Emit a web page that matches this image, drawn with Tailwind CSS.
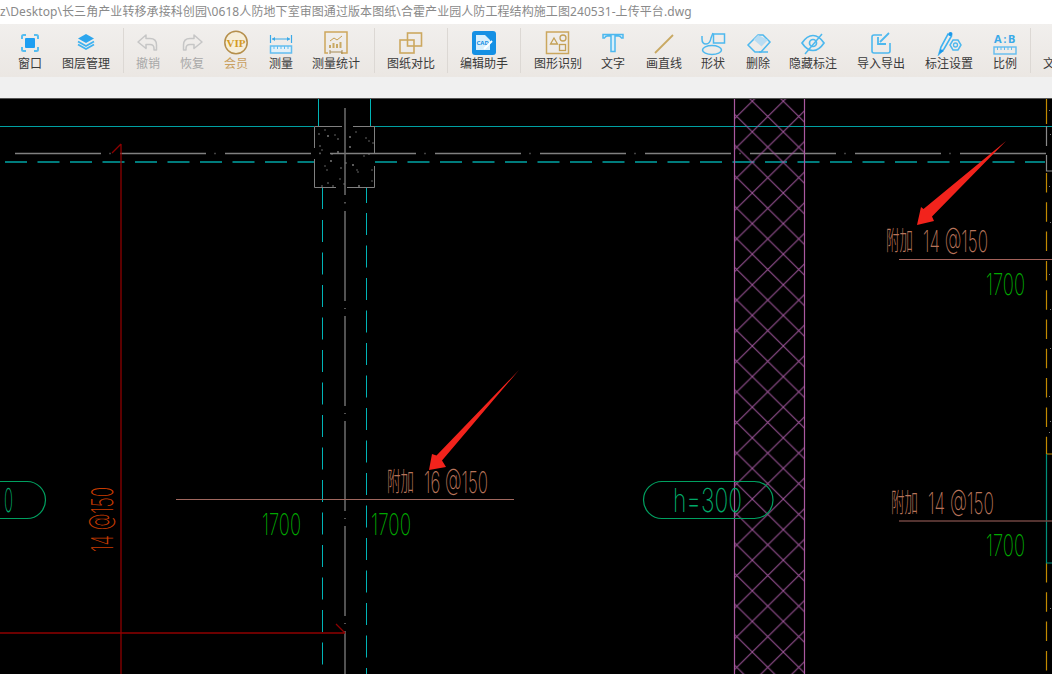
<!DOCTYPE html>
<html lang="zh-CN">
<head>
    <meta charset="UTF-8">
    <title>合霍产业园人防工程结构施工图</title>
    <script src="https://cdn.jsdelivr.net/npm/@tailwindcss/browser@4"></script>
</head>
<body class="w-[1052px] h-[674px] overflow-hidden bg-black font-['Noto_Sans','Noto_Sans_CJK_SC',sans-serif]">

<div class="flex flex-col h-[674px]">
    <!-- title -->
    <div class="h-6 shrink-0 bg-white text-[12px] tracking-[0.08px] leading-6 text-[#8a8a8a] whitespace-nowrap overflow-hidden">z\Desktop\长三角产业转移承接科创园\0618人防地下室审图通过版本图纸\合霍产业园人防工程结构施工图240531-上传平台.dwg</div>

    <!-- toolbar -->
    <div class="h-[53px] shrink-0 flex items-stretch bg-gradient-to-b from-[#f1efed] to-[#ebe7e3] text-[12px] leading-4 text-[#3a3a3a] overflow-hidden whitespace-nowrap">
        <div class="w-[60px] shrink-0 flex flex-col items-center pt-[5px]">
            <svg class="w-7 h-[27px]" viewBox="0 0 28 27" fill="none"><rect x="9" y="9" width="10" height="10" rx="1" fill="#1e9ff2"/><path d="M6 10V7.500Q6 6 7.500 6H10M18 6h2.500Q22 6 22 7.500V10M22 18v2.500Q22 22 20.500 22H18M10 22H7.500Q6 22 6 20.500V18" stroke="#56bdf0" stroke-width="2"/></svg>
            <span>窗口</span>
        </div>
        <div class="w-[52px] shrink-0 flex flex-col items-center pt-[5px]">
            <svg class="w-7 h-[27px]" viewBox="0 0 28 27" fill="none"><path d="M14 5l8 4.500-8 4.500-8-4.500z" fill="#2ca6ee"/><path d="M6 12.500l8 4.500 8-4.500M6 15.500l8 4.500 8-4.500" stroke="#3fb2f0" stroke-width="1.800"/></svg>
            <span>图层管理</span>
        </div>
        <div class="w-px shrink-0 my-1 ml-[11px] bg-[#dcd8d4]"></div>
        <div class="w-12 shrink-0 flex flex-col items-center pt-[5px] text-[#a8a8a8]">
            <svg class="w-7 h-[27px]" viewBox="0 0 28 27" fill="none"><path d="M12 6L4 13l8 6.500v-4h4q4 0 4 4v1.500h2.500v-5q0-6.500-6.500-6.500H12z" stroke="#c6c6c6" stroke-width="1.500" stroke-linejoin="round"/></svg>
            <span>撤销</span>
        </div>
        <div class="w-10 shrink-0 flex flex-col items-center pt-[5px] text-[#a8a8a8]">
            <svg class="w-7 h-[27px]" viewBox="0 0 28 27" fill="none"><path d="M16 6l8 7-8 6.500v-4h-4q-4 0-4 4v1.500H5.500v-5q0-6.500 6.500-6.500h4z" stroke="#c6c6c6" stroke-width="1.500" stroke-linejoin="round"/></svg>
            <span>恢复</span>
        </div>
        <div class="w-12 shrink-0 flex flex-col items-center pt-[5px] text-[#c9a060]">
            <svg class="w-7 h-[27px]" viewBox="0 0 28 27" fill="none"><circle cx="14" cy="13.500" r="11.200" fill="#f6eeda" stroke="#b58f4c" stroke-width="1.500"/><text x="14" y="17.500" text-anchor="middle" class="fill-[#d49a24] font-['Liberation_Serif'] font-bold text-[11px]">VIP</text></svg>
            <span>会员</span>
        </div>
        <div class="w-[42px] shrink-0 flex flex-col items-center pt-[5px]">
            <svg class="w-7 h-[27px]" viewBox="0 0 28 27" fill="none"><path d="M3.500 6v8M24.500 6v8M5 10h18" stroke="#3aa9e8" stroke-width="1.200"/><path d="M5 10l3-2v4zM23 10l-3-2v4z" fill="#3aa9e8"/><rect x="3.500" y="17" width="21" height="7" stroke="#62bdf0" stroke-width="1.500" fill="#e4f1f8"/><path d="M7 17v3M10.500 17v3M14 17v3M17.500 17v3M21 17v3" stroke="#62bdf0"/></svg>
            <span>测量</span>
        </div>
        <div class="w-[68px] shrink-0 flex flex-col items-center pt-[5px]">
            <svg class="w-7 h-[27px]" viewBox="0 0 28 27" fill="none"><path d="M19 24h6V3H3v21h3" stroke="#cda75c" stroke-width="1.500"/><path d="M8 12l4-3 3 2 5-4" stroke="#c79f50"/><path d="M8 19v-3M11.500 19v-5M15 19v-4M18.500 19v-6" stroke="#c9a965" stroke-width="2"/><path d="M8 23h12M8 21v4M20 21v4" stroke="#a58a55"/></svg>
            <span>测量统计</span>
        </div>
        <div class="w-px shrink-0 my-1 ml-1 bg-[#dcd8d4]"></div>
        <div class="w-[72px] shrink-0 flex flex-col items-center pt-[5px]">
            <svg class="w-7 h-[27px]" viewBox="0 0 28 27" fill="none"><rect x="10.500" y="4" width="14" height="13" stroke="#cca860" stroke-width="1.600"/><rect x="3" y="11" width="14" height="13" stroke="#cca860" stroke-width="1.600"/></svg>
            <span>图纸对比</span>
        </div>
        <div class="w-px shrink-0 my-1 bg-[#dcd8d4]"></div>
        <div class="w-[72px] shrink-0 flex flex-col items-center pt-[5px]">
            <svg class="w-7 h-[27px]" viewBox="0 0 28 27" fill="none"><rect x="2" y="2" width="24" height="24" rx="3" fill="#1590e4"/><path d="M6 6h9l5 5v10H6z" fill="#d8effc"/><text x="6.500" y="15.500" class="fill-[#1590e4] font-bold text-[6px]">CAD</text><path d="M14 20l8-8" stroke="#fff" stroke-width="2"/></svg>
            <span>编辑助手</span>
        </div>
        <div class="w-px shrink-0 my-1 bg-[#dcd8d4]"></div>
        <div class="w-[5px] shrink-0"></div>
        <div class="w-16 shrink-0 flex flex-col items-center pt-[5px]">
            <svg class="w-7 h-[27px]" viewBox="0 0 28 27" fill="none"><rect x="2.500" y="3" width="22" height="21.500" stroke="#cba75e" stroke-width="1.500"/><path d="M10 9l3.500 6h-7z" stroke="#c4a055" stroke-width="1.300"/><circle cx="19" cy="9" r="3" stroke="#c4a055" stroke-width="1.300"/><rect x="15.500" y="15.500" width="6" height="6" stroke="#c4a055" stroke-width="1.300"/></svg>
            <span>图形识别</span>
        </div>
        <div class="w-[46px] shrink-0 flex flex-col items-center pt-[5px]">
            <svg class="w-7 h-[27px]" viewBox="0 0 28 27" fill="none"><path d="M4 9V5.500h20V9h-1.500q-1-2-3-2H16v15.500h-4V7H8.500q-2 0-3 2z" fill="#d8effa" stroke="#4db8ee" stroke-width="1.500"/></svg>
            <span>文字</span>
        </div>
        <div class="w-14 shrink-0 flex flex-col items-center pt-[5px]">
            <svg class="w-7 h-[27px]" viewBox="0 0 28 27" fill="none"><path d="M5 24L23 6" stroke="#c9a862" stroke-width="1.800"/></svg>
            <span>画直线</span>
        </div>
        <div class="w-[42px] shrink-0 flex flex-col items-center pt-[5px]">
            <svg class="w-7 h-[27px]" viewBox="0 0 28 27" fill="none"><rect x="14.500" y="5" width="11" height="9" stroke="#4db8ee" stroke-width="1.500"/><path d="M3 7v3q0 5 4 5t5-6l2-5" stroke="#4db8ee" stroke-width="1.500"/><ellipse cx="13" cy="21" rx="9.500" ry="4.500" stroke="#4db8ee" stroke-width="1.500"/></svg>
            <span>形状</span>
        </div>
        <div class="w-12 shrink-0 flex flex-col items-center pt-[5px]">
            <svg class="w-7 h-[27px]" viewBox="0 0 28 27" fill="none"><path d="M14 6l-10 10 7 7h6l9-10-7-7z" stroke="#4db8ee" stroke-width="1.500"/><path d="M14 6l-4.500 4.500 8 7L24 11z" fill="#b8dcf2"/><path d="M15 23h9" stroke="#4db8ee" stroke-width="1.500"/></svg>
            <span>删除</span>
        </div>
        <div class="w-[62px] shrink-0 flex flex-col items-center pt-[5px]">
            <svg class="w-7 h-[27px]" viewBox="0 0 28 27" fill="none"><path d="M3 14q5-7.500 11-7.500T25 14q-5 7.500-11 7.500T3 14z" stroke="#4db8ee" stroke-width="1.700"/><circle cx="14" cy="14" r="3.500" stroke="#4db8ee" stroke-width="1.700"/><path d="M6 25L23 5" stroke="#4db8ee" stroke-width="1.500"/></svg>
            <span>隐藏标注</span>
        </div>
        <div class="w-[74px] shrink-0 flex flex-col items-center pt-[5px]">
            <svg class="w-7 h-[27px]" viewBox="0 0 28 27" fill="none"><path d="M15 6H7q-2 0-2 2v14q0 2 2 2h14q2 0 2-2v-8" stroke="#4db8ee" stroke-width="1.600"/><path d="M22 4l-9 9M11 8v7h8" stroke="#4db8ee" stroke-width="1.800"/></svg>
            <span>导入导出</span>
        </div>
        <div class="w-[62px] shrink-0 flex flex-col items-center pt-[5px]">
            <svg class="w-7 h-[27px]" viewBox="0 0 28 27" fill="none"><path d="M4 25l2-7L13 5l3.500 2-7.500 13z" stroke="#3fb2f0" stroke-width="1.600"/><path d="M4 25l1.500-5 3.500 2z" fill="#1c98ea"/><circle cx="15.500" cy="5" r="2" fill="#1c98ea"/><path d="M18 11l5 0 3 5-3 5h-5l-3-5z" stroke="#4db8ee" stroke-width="1.500"/><circle cx="20.500" cy="16" r="2" stroke="#4db8ee" stroke-width="1.300"/></svg>
            <span>标注设置</span>
        </div>
        <div class="w-[50px] shrink-0 flex flex-col items-center pt-[5px]">
            <svg class="w-7 h-[27px]" viewBox="0 0 28 27" fill="none"><text x="3" y="14" class="fill-[#3aa9e8] font-bold text-[11px]">A</text><text x="12.500" y="13.500" class="fill-[#3aa9e8] font-bold text-[10px]">:</text><text x="17" y="14" class="fill-[#3aa9e8] font-bold text-[11px]">B</text><rect x="3" y="18" width="22" height="7" stroke="#62bdf0" stroke-width="1.400"/><path d="M6.500 18v3M10 18v3M13.500 18v3M17 18v3M20.500 18v3" stroke="#62bdf0"/></svg>
            <span>比例</span>
        </div>
        <div class="w-px shrink-0 my-1 bg-[#dcd8d4]"></div>
        <div class="shrink-0 pl-3 pt-8">文</div>
    </div>

    <div class="h-[21px] shrink-0 bg-[#f0f0f0]"></div>
    <div class="h-px shrink-0 bg-[#555]"></div>

    <!-- drawing -->
    <svg class="block w-[1052px] h-[575px] bg-black" viewBox="0 99 1052 575" fill="none">
        <defs>
            <pattern id="hatch" patternUnits="userSpaceOnUse" x="752.300" y="499" width="31" height="30.600">
                <path d="M0 0L31 30.600M0 30.600L31 0" stroke="#a0559c" stroke-width="1"/>
            </pattern>
        </defs>

        <!-- axis lines -->
        <path d="M0 126.500H314M374 126.500H1052" stroke="#00a0a2" stroke-width="1.200"/>
        <path d="M318.500 99V126M370.500 99V126M322.500 188V209M366.500 188V203" stroke="#00b4b6"/>
        <path d="M15 153.500H1046" stroke="#808080" stroke-width="1.500" stroke-dasharray="86 8.500 1 9.500"/>
        <path d="M5 162H314M375 162H1045" stroke="#007c7c" stroke-width="2" stroke-dasharray="22 10.500"/>
        <path d="M322.500 220V674" stroke="#00b4b6" stroke-dasharray="22 10.500"/>
        <path d="M366.500 213V674" stroke="#00b4b6" stroke-dasharray="22 10.500"/>

        <!-- column -->
        <path d="M314.500 148V126.500H342M353 126.500H374.500V154M374.500 166V187.500H347M336 187.500H314.500V159" stroke="#808080"/>
        <path d="M345 108V195M345 202v1.500" stroke="#6e6e6e" stroke-width="1.500"/>
        <path d="M345 211V674" stroke="#6e6e6e" stroke-width="1.500" stroke-dasharray="90 7 1 7"/>
        <g fill="#858585">
            <circle cx="319" cy="134" r=".8"/><circle cx="325" cy="130" r=".7"/><circle cx="328" cy="136" r=".9"/><circle cx="335" cy="135" r=".7"/><circle cx="338" cy="139" r=".8"/><circle cx="350" cy="137" r=".9"/><circle cx="356" cy="132" r=".7"/><circle cx="366" cy="138" r=".7"/><circle cx="369" cy="141" r=".7"/><circle cx="373" cy="143" r=".7"/>
            <circle cx="320" cy="146" r=".8"/><circle cx="322" cy="150" r=".7"/><circle cx="320" cy="153" r=".6"/><circle cx="332" cy="154" r=".8"/><circle cx="338" cy="152" r=".9"/><circle cx="350" cy="147" r=".9"/><circle cx="364" cy="156" r=".7"/><circle cx="369" cy="154" r=".8"/>
            <circle cx="331" cy="161" r=".9"/><circle cx="325" cy="166" r=".7"/><circle cx="327" cy="170" r=".7"/><circle cx="341" cy="168" r=".8"/><circle cx="346" cy="163" r=".8"/><circle cx="353" cy="165" r=".9"/><circle cx="357" cy="170" r=".7"/><circle cx="358" cy="172" r=".7"/><circle cx="372" cy="170" r=".7"/><circle cx="340" cy="179" r=".7"/>
            <circle cx="328" cy="183" r=".8"/><circle cx="322" cy="186" r=".8"/><circle cx="333" cy="186" r=".8"/><circle cx="344" cy="184" r=".7"/><circle cx="359" cy="186" r=".9"/><circle cx="372" cy="181" r=".7"/>
        </g>

        <!-- red beams -->
        <path d="M121 144V674M112 153L121 144M0 633H345M336 624L345 633" stroke="#8e0000" stroke-width="1.300"/>

        <!-- hatched wall -->
        <rect x="735" y="99" width="69.500" height="575" fill="url(#hatch)"/>
        <path d="M734.500 99V674M804.500 99V674" stroke="#a9589f" stroke-width="1.200"/>

        <!-- right edge -->
        <path d="M1046.500 173V454M1046.500 563V674" stroke="#c28a00" stroke-width="1.200" stroke-dasharray="19.500 9.800"/>
        <path d="M1046.500 99V124" stroke="#c28a00" stroke-width="1.200"/>
        <path d="M1046.500 126V146M1046.500 155V171H1052" stroke="#8a8a8a" stroke-width="1.200"/>
        <path d="M1046.500 454H1052" stroke="#c28a00"/>
        <path d="M1046.500 454V563H1052" stroke="#00907c" stroke-width="1.200"/>
        <g fill="#7a7a7a"><rect x="1049" y="110" width="1" height="1"/><rect x="1050" y="134" width="1" height="1"/><rect x="1049" y="186" width="1" height="1"/><rect x="1050" y="222" width="1" height="1"/><rect x="1049" y="274" width="1" height="1"/><rect x="1050" y="309" width="1" height="1"/><rect x="1050" y="348" width="1" height="1"/><rect x="1049" y="396" width="1" height="1"/><rect x="1050" y="421" width="1" height="1"/><rect x="1049" y="432" width="1" height="1"/><rect x="1050" y="608" width="1" height="1"/></g>

        <!-- leader lines -->
        <path d="M899 259.500H1052" stroke="#a3625a"/>
        <path d="M176 499.500H514" stroke="#a0685f"/>
        <path d="M899 521H1052" stroke="#6f4540" stroke-width="1.300"/>

        <!-- level tags -->
        <rect x="643.500" y="481.500" width="129.500" height="37" rx="18.500" stroke="#00a060" stroke-width="1.200"/>
        <rect x="-90" y="481.500" width="135.500" height="37" rx="18.500" stroke="#00a060" stroke-width="1.200"/>
        <text x="673" y="512" textLength="69" lengthAdjust="spacingAndGlyphs" class="fill-[#00a868] font-['Inter'] font-extralight text-[33px]">h=300</text>
        <text x="4" y="512" textLength="9" lengthAdjust="spacingAndGlyphs" class="fill-[#00a868] font-['Inter'] font-extralight text-[33px]">0</text>

        <!-- dimensions -->
        <g class="fill-[#00a800] font-['Inter'] font-extralight text-[30px]">
            <text x="262" y="535" textLength="39" lengthAdjust="spacingAndGlyphs">1700</text>
            <text x="371" y="535" textLength="40" lengthAdjust="spacingAndGlyphs">1700</text>
            <text x="986" y="295" textLength="39" lengthAdjust="spacingAndGlyphs">1700</text>
            <text x="986" y="556" textLength="39" lengthAdjust="spacingAndGlyphs">1700</text>
        </g>

        <!-- rebar notes, squeezed like the CAD font -->
        <g class="fill-[#b8745a] font-['Inter'] font-extralight text-[30px]">
            <text transform="translate(424 493) scale(.5 1)" textLength="128" lengthAdjust="spacingAndGlyphs">16 @150</text>
            <text transform="translate(923 252) scale(.5 1)" textLength="130" lengthAdjust="spacingAndGlyphs">14 @150</text>
            <text transform="translate(928 514) scale(.5 1)" textLength="132" lengthAdjust="spacingAndGlyphs">14 @150</text>
        </g>
        <g class="fill-[#b8745a] font-['Noto_Sans_CJK_SC'] font-light text-[26px]">
            <text transform="translate(387 491) scale(.52 1)">附加</text>
            <text transform="translate(886 250) scale(.52 1)">附加</text>
            <text transform="translate(891 512) scale(.52 1)">附加</text>
        </g>
        <text transform="translate(113 552) rotate(-90)" textLength="65" lengthAdjust="spacingAndGlyphs" class="fill-[#c83c00] font-['Inter'] font-extralight text-[30px]">14 @150</text>

        <!-- annotation arrows -->
        <path d="M1006 141L932 216.500L934 221L917 225L921 207L923.500 209z" fill="#f2231c"/>
        <path d="M519 370L442 460.500L446 467L429 470L432 454L436.500 455.500z" fill="#f2231c"/>
    </svg>
</div>

</body>
</html>
